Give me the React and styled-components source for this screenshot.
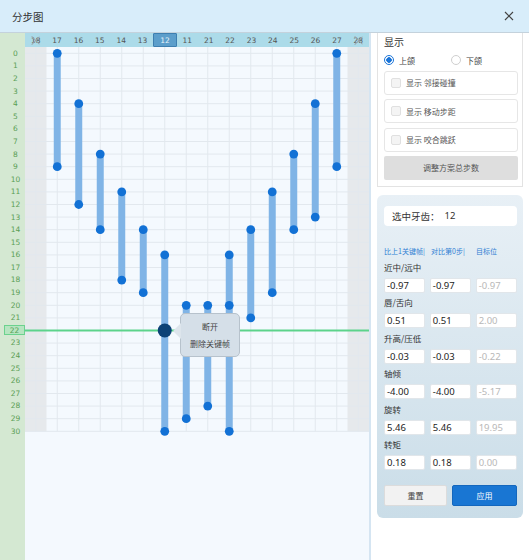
import React from "react";
import styled, { createGlobalStyle, css } from "styled-components";

const GlobalStyle = createGlobalStyle`
  body {
    margin: 0;
    font-family: "Noto Sans", "Noto Sans CJK SC", sans-serif;
    color: #333;
  }
`;

const TEETH = [18, 17, 16, 15, 14, 13, 12, 11, 21, 22, 23, 24, 25, 26, 27, 28];
const COL_W = 21.5;
const ROW_H = 12.6;
const ROWS = 31;

// [column index, start row, end row, extra keyframe rows]
const BARS = [
  [1, 0, 9, []],
  [2, 4, 12, []],
  [3, 8, 14, []],
  [4, 11, 18, []],
  [5, 14, 19, []],
  [6, 16, 30, []],
  [7, 20, 29, []],
  [8, 20, 28, []],
  [9, 16, 30, [20]],
  [10, 14, 21, []],
  [11, 11, 19, []],
  [12, 8, 14, []],
  [13, 4, 13, []],
  [14, 0, 9, []],
];

const FIELDS = [
  { label: "近中/远中", values: ["-0.97", "-0.97", "-0.97"] },
  { label: "唇/舌向", values: ["0.51", "0.51", "2.00"] },
  { label: "升高/压低", values: ["-0.03", "-0.03", "-0.22"] },
  { label: "轴倾", values: ["-4.00", "-4.00", "-5.17"] },
  { label: "旋转", values: ["5.46", "5.46", "19.95"] },
  { label: "转矩", values: ["0.18", "0.18", "0.00"] },
];

const cx = (i) => i * COL_W + COL_W / 2;
const cy = (r) => r * ROW_H + ROW_H / 2;

const Plot = () => {
  const gridH = cy(30);
  return (
    <svg width="344" height="513" style={{ display: "block" }}>
      <rect x="0" y="0" width={COL_W} height={gridH} fill="#e6e9ec" />
      <rect x={COL_W * 15} y="0" width={COL_W} height={gridH} fill="#e6e9ec" />
      {Array.from({ length: ROWS }).map((_, r) => (
        <line key={"h" + r} x1="0" x2="344" y1={cy(r)} y2={cy(r)} stroke="#e2e8ee" strokeWidth="1" />
      ))}
      {TEETH.map((_, i) => (
        <line key={"v" + i} x1={cx(i)} x2={cx(i)} y1="0" y2={gridH} stroke="#e2e8ee" strokeWidth="1" />
      ))}
      <line x1="0" x2="344" y1={cy(22)} y2={cy(22)} stroke="#5cd38b" strokeWidth="2" />
      {BARS.map(([c, a, b]) => (
        <line key={"b" + c} x1={cx(c)} x2={cx(c)} y1={cy(a)} y2={cy(b)} stroke="#80b4e6" strokeWidth="7" />
      ))}
      {BARS.map(([c, a, b, extra]) =>
        [a, b, ...extra].map((r) => <circle key={c + "-" + r} cx={cx(c)} cy={cy(r)} r="4.4" fill="#1271d5" />)
      )}
      <circle cx={cx(6)} cy={cy(22)} r="7" fill="#0c4276" />
    </svg>
  );
};

const App = () => (
  <>
    <GlobalStyle />
    <Dialog>
      <TitleBar>
        <Title>分步图</Title>
        <svg width="10" height="10" viewBox="0 0 10 10">
          <path d="M1 1 L9 9 M9 1 L1 9" stroke="#444" strokeWidth="1.2" fill="none" />
        </svg>
      </TitleBar>
      <Body>
        <ChartPane>
          <Corner />
          <Header>
            {TEETH.map((t, i) => (
              <HeaderCell key={i} crossed={i === 0 || i === 15} selected={t === 12}>
                {t}
              </HeaderCell>
            ))}
          </Header>
          <RowLabels>
            {Array.from({ length: ROWS }).map((_, r) => (
              <RowLabel key={r} active={r === 22}>
                {r}
              </RowLabel>
            ))}
          </RowLabels>
          <Plot />
          <Menu>
            <MenuItem>断开</MenuItem>
            <MenuItem>删除关键帧</MenuItem>
          </Menu>
        </ChartPane>
        <SidePanel>
          <DisplayCard>
            <CardTitle>显示</CardTitle>
            <RadioRow>
              <RadioLabel>
                <Radio checked />
                上颌
              </RadioLabel>
              <RadioLabel>
                <Radio />
                下颌
              </RadioLabel>
            </RadioRow>
            <OptionBox>
              <Check />
              显示 邻接碰撞
            </OptionBox>
            <OptionBox>
              <Check />
              显示 移动步距
            </OptionBox>
            <OptionBox>
              <Check />
              显示 咬合跳跃
            </OptionBox>
            <GreyButton>调整方案总步数</GreyButton>
          </DisplayCard>
          <EditPanel>
            <SelectedBox>
              选中牙齿：<strong>12</strong>
            </SelectedBox>
            <Tabs>
              <span>比上1关键帧|</span>
              <span>对比第0步|</span>
              <span>目标位</span>
            </Tabs>
            {FIELDS.map((f) => (
              <FieldGroup key={f.label}>
                <FieldLabel>{f.label}</FieldLabel>
                <InputRow>
                  {f.values.map((v, i) => (
                    <ValueBox key={i} muted={i === 2}>
                      {v}
                    </ValueBox>
                  ))}
                </InputRow>
              </FieldGroup>
            ))}
            <ButtonRow>
              <ResetButton>重置</ResetButton>
              <ApplyButton>应用</ApplyButton>
            </ButtonRow>
          </EditPanel>
        </SidePanel>
      </Body>
    </Dialog>
  </>
);

// style

const Dialog = styled.div`
  width: 529px;
  height: 560px;
  display: flex;
  flex-direction: column;
  background: #fff;
  overflow: hidden;
`;

const TitleBar = styled.div`
  height: 32px;
  flex-shrink: 0;
  display: flex;
  align-items: center;
  justify-content: space-between;
  padding: 0 15px 0 12px;
  background: #d8edfa;
  border-bottom: 1px solid #c4d2dc;
`;

const Title = styled.div`
  font-family: "Noto Sans CJK SC", sans-serif;
  font-size: 10.5px;
  color: #333;
`;

const Body = styled.div`
  flex: 1;
  display: flex;
  min-height: 0;
`;

const ChartPane = styled.div`
  position: relative;
  width: 369px;
  flex-shrink: 0;
  border-right: 2px solid #d5e5f2;
  background: #f4f9fe;
  display: grid;
  grid-template-columns: 25px 344px;
  grid-template-rows: 14px 1fr;
  overflow: hidden;
`;

const Corner = styled.div`
  background: #d4e8d2;
`;

const Header = styled.div`
  display: flex;
  background: #acdbe9;
`;

const HeaderCell = styled.div`
  flex: 1;
  position: relative;
  display: flex;
  align-items: center;
  justify-content: center;
  font-family: "DejaVu Sans", sans-serif;
  font-size: 7.5px;
  color: #555;
  ${(p) =>
    p.selected &&
    css`
      background: #5c9ecb;
      border: 1px solid #3e7fb0;
      border-radius: 1px;
      color: #e6f2fa;
    `}
  ${(p) =>
    p.crossed &&
    css`
      &::before,
      &::after {
        content: "";
        position: absolute;
        left: 5px;
        right: 5px;
        top: 50%;
        height: 1px;
        background: #9aa4aa;
        transform: rotate(45deg);
      }
      &::after {
        transform: rotate(-45deg);
      }
    `}
`;

const RowLabels = styled.div`
  background: #d4e8d2;
  display: flex;
  flex-direction: column;
`;

const RowLabel = styled.div`
  height: ${ROW_H}px;
  flex-shrink: 0;
  display: flex;
  align-items: center;
  justify-content: center;
  padding-left: 6px;
  font-family: "DejaVu Sans", sans-serif;
  font-size: 7.5px;
  color: #5a9e55;
  box-sizing: border-box;
  ${(p) =>
    p.active &&
    css`
      height: 10px;
      margin: 1.3px 0 1.3px 4px;
      padding-left: 0;
      background: #b6e5c1;
      border: 1px solid #6bd28e;
    `}
`;

const Menu = styled.div`
  position: absolute;
  left: 180px;
  top: 280px;
  width: 58px;
  height: 42px;
  background: #d5dfe8;
  border: 1px solid #b7c2cc;
  border-radius: 5px;
  display: flex;
  flex-direction: column;
  justify-content: center;
  gap: 5px;
  &::before {
    content: "";
    position: absolute;
    left: -8px;
    top: 9px;
    border-top: 8px solid transparent;
    border-bottom: 8px solid transparent;
    border-right: 8px solid #dde5ec;
  }
`;

const MenuItem = styled.div`
  text-align: center;
  font-family: "Noto Sans CJK SC", sans-serif;
  font-size: 8px;
  line-height: 12px;
  color: #444;
`;

const SidePanel = styled.div`
  flex: 1;
  padding: 0 7px 0 6px;
  background: #fff;
  display: flex;
  flex-direction: column;
  font-family: "Noto Sans CJK SC", sans-serif;
`;

const DisplayCard = styled.div`
  border: 1px solid #e3e3e3;
  border-top: none;
  padding: 2px 4px 6px 6px;
  display: flex;
  flex-direction: column;
`;

const CardTitle = styled.div`
  font-size: 10px;
  line-height: 14px;
  color: #333;
`;

const RadioRow = styled.div`
  margin-top: 5px;
  height: 12px;
  display: flex;
  align-items: center;
`;

const RadioLabel = styled.div`
  width: 67px;
  display: flex;
  align-items: center;
  gap: 5px;
  font-size: 8px;
  color: #444;
`;

const Radio = styled.span`
  width: 10px;
  height: 10px;
  box-sizing: border-box;
  border-radius: 50%;
  border: 1px solid ${(p) => (p.checked ? "#1a74d8" : "#cfcfcf")};
  background: ${(p) => (p.checked ? "radial-gradient(circle, #1a74d8 0 2.5px, #fff 3px)" : "#fff")};
`;

const OptionBox = styled.div`
  margin-top: ${(p) => (p.first ? "9px" : "4.5px")};
  height: 24px;
  box-sizing: border-box;
  border: 1px solid #e6e6e6;
  border-radius: 3px;
  display: flex;
  align-items: center;
  gap: 5px;
  padding-left: 6px;
  font-size: 8px;
  color: #555;
  &:first-of-type {
    margin-top: 9px;
  }
`;

const Check = styled.span`
  width: 10px;
  height: 10px;
  box-sizing: border-box;
  border: 1px solid #e0e0e0;
  border-radius: 2px;
  background: #f4f4f4;
`;

const GreyButton = styled.div`
  margin-top: 4px;
  height: 24px;
  display: flex;
  align-items: center;
  justify-content: center;
  background: #dedede;
  border-radius: 2px;
  font-size: 8px;
  color: #555;
`;

const EditPanel = styled.div`
  margin-top: 8px;
  height: 323px;
  box-sizing: border-box;
  padding: 11px 6px 0 7px;
  border-radius: 6px;
  background: linear-gradient(#e8f0f6, #cadde8);
  display: flex;
  flex-direction: column;
`;

const SelectedBox = styled.div`
  height: 20px;
  background: #fff;
  border-radius: 4px;
  display: flex;
  align-items: center;
  padding-left: 8px;
  font-size: 9.5px;
  color: #333;
  strong {
    font-family: "Noto Sans", sans-serif;
    font-weight: normal;
    margin-left: 5px;
  }
`;

const Tabs = styled.div`
  margin-top: 19px;
  height: 12px;
  display: grid;
  grid-template-columns: 47px 45px 1fr;
  align-items: center;
  font-size: 7px;
  color: #2f80d3;
  white-space: nowrap;
`;

const FieldGroup = styled.div`
  margin-top: 3px;
  & + & {
    margin-top: 2.5px;
  }
`;

const FieldLabel = styled.div`
  height: 14px;
  line-height: 14px;
  font-size: 8.5px;
  color: #333;
`;

const InputRow = styled.div`
  margin-top: 4px;
  display: grid;
  grid-template-columns: repeat(3, 1fr);
  gap: 4.5px;
`;

const ValueBox = styled.div`
  height: 15px;
  box-sizing: border-box;
  background: #fff;
  border: 1px solid #e1e6ea;
  border-radius: 2px;
  padding-left: 2px;
  display: flex;
  align-items: center;
  font-family: "Noto Sans", sans-serif;
  font-size: 9.5px;
  color: ${(p) => (p.muted ? "#b8b8b8" : "#222")};
`;

const ButtonRow = styled.div`
  margin-top: 14.5px;
  display: grid;
  grid-template-columns: 63px 1fr;
  gap: 5px;
`;

const BaseButton = styled.div`
  height: 21px;
  box-sizing: border-box;
  border-radius: 2px;
  display: flex;
  align-items: center;
  justify-content: center;
  font-size: 8px;
`;

const ResetButton = styled(BaseButton)`
  background: #f2f2f2;
  border: 1px solid #dcdcdc;
  color: #444;
`;

const ApplyButton = styled(BaseButton)`
  background: #1976d3;
  border: 1px solid #1467bd;
  color: #fff;
`;

export default App;
